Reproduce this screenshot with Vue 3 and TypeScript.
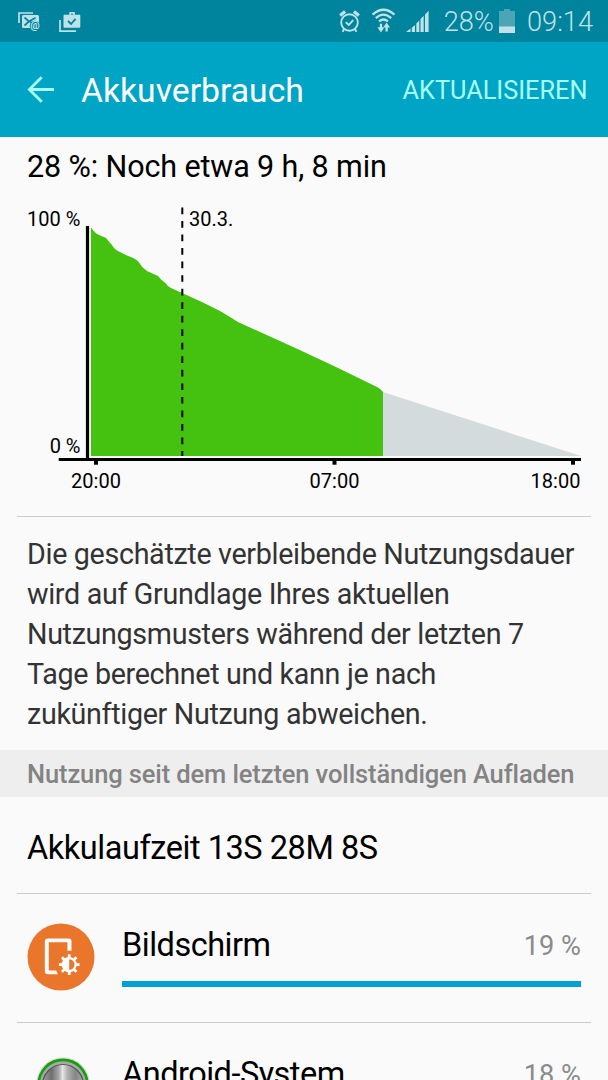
<script setup lang="ts">
interface Usage {
  name: string
  percent: number
  icon: 'display' | 'system'
}

const usages: Usage[] = [
  { name: 'Bildschirm', percent: 19, icon: 'display' },
  { name: 'Android-System', percent: 18, icon: 'system' },
]
const maxPercent = Math.max(...usages.map((u) => u.percent))

const teeth = [0, 45, 90, 135, 180, 225, 270, 315]
const ticks = [
  { x: 96, label: '20:00', textX: 96 },
  { x: 334.5, label: '07:00', textX: 334.5 },
  { x: 573, label: '18:00', textX: 555.5 },
]
</script>

<template>
  <div class="screen">
    <div class="status">
      <svg class="status-left" width="66" height="24" viewBox="0 0 66 24">
        <g fill="none" stroke="#bfe2e8" stroke-width="1.7">
          <path d="M1 12V2H15" />
          <path d="M42 9V20.2H58" />
          <path d="M52.2 4V1.9H56V4" />
        </g>
        <rect x="4" y="4" width="17" height="13" rx="1.5" fill="#bfe2e8" />
        <path d="M6.5 6.5L11 10.4L17.5 6.8M6.5 14.5L11 10.4L15 12" fill="none" stroke="#00839d" stroke-width="1.7" />
        <circle cx="17" cy="15" r="5.3" fill="#00839d" />
        <text class="at" x="12.3" y="18">@</text>
        <rect x="45.5" y="3.8" width="16.8" height="13" rx="1" fill="#bfe2e8" />
        <path d="M50 10L53 13L57.6 7.8" fill="none" stroke="#00839d" stroke-width="1.8" />
      </svg>
      <div class="status-right">
        <svg class="indicators" width="92" height="28" viewBox="0 0 92 28">
          <g fill="none" stroke="#bfe2e8" stroke-width="1.9">
            <circle cx="10.5" cy="15.5" r="8.3" />
            <path d="M6.8 15.2L9.8 18L14.2 13.2" />
            <path d="M1.1 8.6L6.1 4.4M19.9 8.6L14.9 4.4" stroke-width="3.2" />
            <path d="M5 22L3.7 24.8M16 22L17.3 24.8" />
          </g>
          <g fill="none" stroke="#bfe2e8" stroke-width="2.3">
            <path d="M33.6 7.6Q44.5 -2.2 55.4 7.6" />
            <path d="M36.8 11.1Q44.5 4.1 52.2 11.1" />
            <path d="M40.1 14.3Q44.5 10.6 48.9 14.3" />
            <path d="M42 16.7V21.5M47.6 24.5V19.5" />
          </g>
          <path d="M38.4 20.3H45.4L42 25.5ZM44.2 20.5H51L47.6 15.5Z" fill="#bfe2e8" />
          <path d="M67 25L71.5 21.5V25ZM72.8 20.7L76 17.9V25H72.8ZM77.3 16.5L80.3 13.5V25H77.3ZM81.5 12L84.7 8.8V25H81.5ZM86 7.5L89.6 3.8V25H86Z" fill="#bfe2e8" />
        </svg>
        <span class="level">28%</span>
        <svg class="battery" width="16" height="24" viewBox="0 0 16 24">
          <path d="M5 0H11V2H16V24H0V2H5Z" fill="#4ba5b5" />
          <rect x="0" y="17.5" width="16" height="6.5" fill="#bfe2e8" />
        </svg>
        <span class="clock">09:14</span>
      </div>
    </div>

    <header class="bar">
      <svg class="back" width="28" height="28" viewBox="0 0 28 28">
        <path d="M14.7 1.3L2.4 13.5L14.7 25.7M2.4 13.5H27" fill="none" stroke="#a9fff4" stroke-width="2.8" />
      </svg>
      <h1>Akkuverbrauch</h1>
      <button class="refresh">AKTUALISIEREN</button>
    </header>

    <p class="estimate">28 %: Noch etwa 9 h, 8 min</p>

    <svg class="chart" width="608" height="316" viewBox="0 200 608 316">
      <path
        d="M91 227.5Q95 233 98 234.5L106 238Q109 242 112 245Q114 249 117 250.5L127 255.5Q137 259 139 262.5Q142 268 147 271L158 276Q161 280 166 283.5Q167 286 171 288L182 293L202 302L221 311.5L238 322L280 341L304 352L336 367L378 387.5Q381 389 383 392V456H91Z"
        fill="#45c110"
      />
      <path d="M383 392L581 456H383Z" fill="#d3dbdc" />
      <path d="M182.3 207.5V456" stroke="#000" stroke-width="2" stroke-dasharray="6.7 6.83" />
      <path d="M87.5 226V459" stroke="#000" stroke-width="3.2" />
      <path d="M58.7 459.5H581" stroke="#000" stroke-width="3.2" />
      <text x="27" y="226.3">100 %</text>
      <text x="189" y="226.3">30.3.</text>
      <text x="80.5" y="453" text-anchor="end">0 %</text>
      <g v-for="t in ticks" :key="t.label">
        <rect :x="t.x - 2" y="460" width="4" height="4.7" />
        <text :x="t.textX" y="488.2" text-anchor="middle">{{ t.label }}</text>
      </g>
    </svg>

    <hr />
    <p class="note">
      Die geschätzte verbleibende Nutzungsdauer<br />
      wird auf Grundlage Ihres aktuellen<br />
      Nutzungsmusters während der letzten 7<br />
      Tage berechnet und kann je nach<br />
      zukünftiger Nutzung abweichen.
    </p>

    <h2>Nutzung seit dem letzten vollständigen Aufladen</h2>
    <p class="runtime">Akkulaufzeit 13S 28M 8S</p>

    <template v-for="u in usages" :key="u.name">
      <hr />
      <div class="row">
        <svg v-if="u.icon === 'display'" class="icon" width="68" height="68" viewBox="0 0 68 68">
          <circle cx="34" cy="34" r="33.5" fill="#e9762b" />
          <path d="M30.8 51.2H21Q17.8 51.2 17.8 48V18.7Q17.8 15.5 21 15.5H42Q44.5 15.5 44.5 18V27.8H40.4V19.3H21.8V47.4H29.2Z" fill="#fafafa" />
          <g transform="translate(42.2 41.6)">
            <rect v-for="a in teeth" :key="a" x="-1.4" y="-10.3" width="2.8" height="4.5" fill="#fff" :transform="`rotate(${a})`" />
            <circle r="7.6" fill="#fff" />
            <path d="M0 -5.3A5.3 5.3 0 0 1 0 5.3Z" fill="#e9762b" />
          </g>
        </svg>
        <svg v-else class="icon" width="68" height="68" viewBox="0 0 68 68">
          <defs>
            <linearGradient id="metal" x1="0" y1="0" x2="1" y2="0">
              <stop offset="0" stop-color="#a0a0a0" />
              <stop offset=".22" stop-color="#6f6f6f" />
              <stop offset=".4" stop-color="#a8a8a8" />
              <stop offset=".49" stop-color="#e6e6e6" />
              <stop offset=".6" stop-color="#b4b4b4" />
              <stop offset=".8" stop-color="#858585" />
              <stop offset="1" stop-color="#a8a8a8" />
            </linearGradient>
          </defs>
          <circle cx="36" cy="32" r="26.8" fill="#bbb" opacity=".5" />
          <circle cx="36" cy="32" r="25.6" fill="#18a00c" />
          <circle cx="36" cy="32.2" r="23" fill="#a9a9a9" />
          <circle cx="36" cy="33" r="20.5" fill="url(#metal)" stroke="#555" stroke-width="1.2" />
        </svg>
        <div class="details">
          <div class="labels">
            <span class="name">{{ u.name }}</span>
            <span class="percent">{{ u.percent }} %</span>
          </div>
          <div class="track">
            <div class="fill" :style="{ width: (u.percent / maxPercent) * 100 + '%' }"></div>
          </div>
        </div>
      </div>
    </template>
  </div>
</template>

<style>
body {
  margin: 0;
  background: #fafafa;
}
</style>

<style scoped>
.screen {
  width: 608px;
  height: 1080px;
  overflow: hidden;
  background: #fafafa;
  color: #000;
  font-family: Roboto, "Liberation Sans", sans-serif;
  font-variant-ligatures: none;
  white-space: nowrap;
}
p,
h1,
h2 {
  margin: 0;
  font-weight: 400;
}
.status {
  height: 42px;
  background: #00839d;
  display: flex;
  justify-content: space-between;
  box-sizing: border-box;
  padding: 0 15px 0 18px;
}
.status-left {
  margin-top: 11px;
}
.at {
  font: 700 10.5px Roboto, sans-serif;
  fill: #bfe2e8;
}
.status-right {
  display: flex;
  font-size: 27.2px;
  line-height: 45px;
  font-weight: 300;
  color: #bfe2e8;
}
.indicators {
  margin: 7px 13px 0 0;
}
.battery {
  margin: 9px 12px 0 5px;
}
.bar {
  height: 94.5px;
  background: #00a5c6;
  display: flex;
  box-sizing: border-box;
  padding: 0 20.5px 0 27px;
}
.back {
  margin: 34px 26px 0 0;
}
h1 {
  font-size: 33.7px;
  line-height: 98px;
  color: #fff;
}
.refresh {
  margin-left: auto;
  padding: 0;
  border: 0;
  background: none;
  font: 400 25.3px/97px Roboto, sans-serif;
  color: #a9fff4;
}
.estimate {
  height: 63.5px;
  padding-left: 27px;
  font-size: 30.5px;
  letter-spacing: -0.11px;
  line-height: 59px;
}
.chart {
  display: block;
}
.chart text {
  font-size: 20px;
}
hr {
  height: 1px;
  margin: 0 17px;
  border: 0;
  background: #cbcbcb;
}
.note {
  height: 216px;
  box-sizing: border-box;
  padding: 17px 0 0 27px;
  font-size: 28.7px;
  letter-spacing: -0.33px;
  line-height: 40px;
  color: #333;
}
h2 {
  margin-top: 17px;
  height: 47px;
  padding-left: 27px;
  background: #eee;
  color: #838383;
  font-size: 25.5px;
  letter-spacing: -0.12px;
  line-height: 49px;
  font-weight: 500;
}
.runtime {
  height: 96px;
  padding-left: 27px;
  font-size: 32.5px;
  letter-spacing: -0.45px;
  line-height: 102px;
}
.row {
  height: 128px;
  box-sizing: border-box;
  padding: 29px 27px 0;
  display: flex;
}
.icon {
  flex: none;
  margin-right: 27px;
}
.details {
  flex: 1;
}
.labels {
  display: flex;
  justify-content: space-between;
  height: 58px;
  line-height: 44px;
}
.name {
  font-size: 32.5px;
  letter-spacing: -0.5px;
}
.percent {
  font-size: 27.2px;
  line-height: 46px;
  color: #8b8b8b;
}
.track {
  height: 6px;
}
.fill {
  height: 6px;
  background: #00a0d2;
}
</style>
